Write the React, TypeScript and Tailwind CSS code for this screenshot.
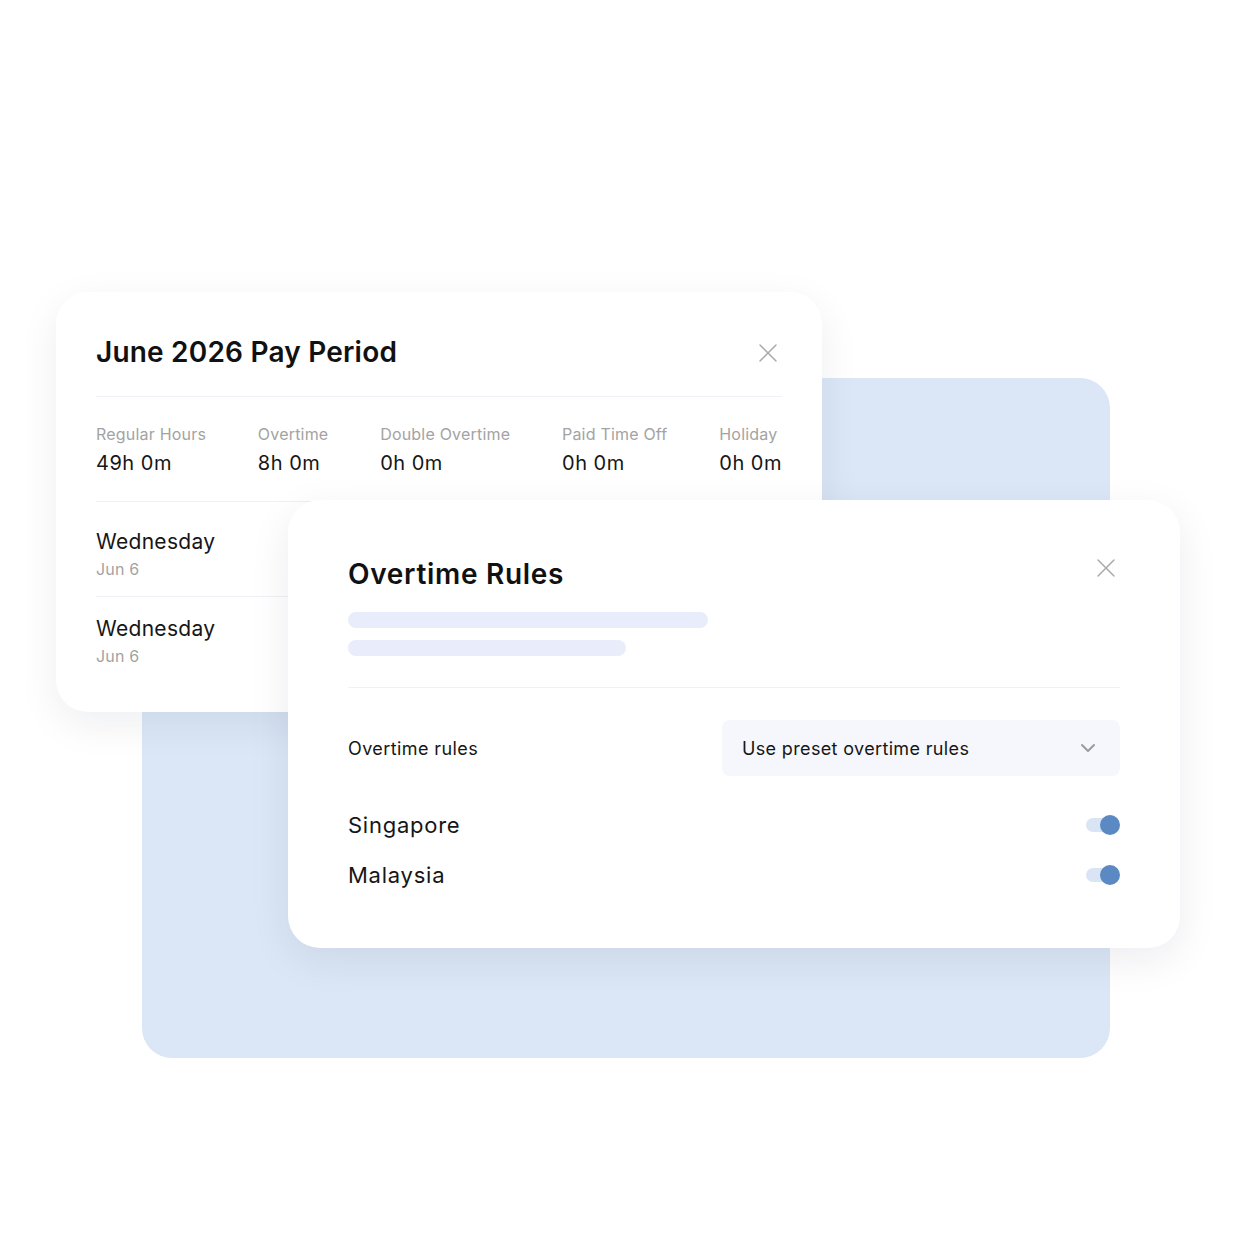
import { ChevronDown, X } from 'lucide-react';

const stats = [
  { label: 'Regular Hours', value: '49h 0m' },
  { label: 'Overtime', value: '8h 0m' },
  { label: 'Double Overtime', value: '0h 0m' },
  { label: 'Paid Time Off', value: '0h 0m' },
  { label: 'Holiday', value: '0h 0m' },
];

const days = [
  { id: 1, day: 'Wednesday', date: 'Jun 6', pad: 'pt-[26px] pb-[16px]' },
  { id: 2, day: 'Wednesday', date: 'Jun 6', pad: 'pt-[18px] pb-[16px]' },
];

const regions = ['Singapore', 'Malaysia'];

function Toggle() {
  return (
    <div className="relative h-[14px] w-[34px]">
      <div className="absolute left-0 top-0 h-[14px] w-[28px] rounded-full bg-[#d9e5f5]" />
      <div className="absolute right-0 top-1/2 h-5 w-5 -translate-y-1/2 rounded-full bg-[#5a89c3]" />
    </div>
  );
}

function PayPeriodCard() {
  return (
    <div className="absolute left-[56px] top-[292px] h-[420px] w-[766px] rounded-[32px] bg-white px-10 pt-[40px] shadow-[0_12px_40px_rgba(20,30,60,0.07)]">
      <div className="flex items-center justify-between">
        <h2 className="text-[28px] font-semibold leading-[40px] tracking-[0.2px] text-[#111]">June 2026 Pay Period</h2>
        <X className="-mr-[2px] mt-[2px] h-8 w-8 text-[#a9a9a9]" strokeWidth={1.1} />
      </div>
      <div className="mt-[24px] h-px bg-[#f0f1f6]" />
      <div className="flex justify-between pt-[26px] pb-[24px]">
        {stats.map((s) => (
          <div key={s.label} className="flex flex-col">
            <span className="text-[16px] leading-[22px] tracking-[0.2px] text-[#a3a3a3]">{s.label}</span>
            <span className="mt-[4px] text-[20px] leading-[28px] tracking-[0.5px] text-[#161616]">{s.value}</span>
          </div>
        ))}
      </div>
      <div className="w-[240px]">
        {days.map((d) => (
          <div key={d.id} className={`border-t border-[#f0f1f6] ${d.pad}`}>
            <div className="text-[21px] leading-[28px] tracking-[0.3px] text-[#161616]">{d.day}</div>
            <div className="mt-[2px] text-[16px] leading-[22px] tracking-[0.2px] text-[#a3a3a3]">{d.date}</div>
          </div>
        ))}
      </div>
    </div>
  );
}

function OvertimeCard() {
  return (
    <div className="absolute left-[288px] top-[500px] h-[448px] w-[892px] rounded-[32px] bg-white px-[60px] pt-[56px] shadow-[0_12px_40px_rgba(20,30,60,0.08)]">
      <div className="flex items-start justify-between">
        <h2 className="text-[28px] font-semibold leading-[36px] tracking-[0.7px] text-[#111]">Overtime Rules</h2>
        <X className="-mr-[2px] mt-[-4px] h-8 w-8 text-[#a9a9a9]" strokeWidth={1.1} />
      </div>
      <div className="mt-[20px] flex flex-col gap-3">
        <div className="h-4 w-[360px] rounded-full bg-[#e9edfb]" />
        <div className="h-4 w-[278px] rounded-full bg-[#e9edfb]" />
      </div>
      <div className="mt-[31px] h-px bg-[#f0f1f6]" />
      <div className="mt-[32px] flex items-center justify-between">
        <span className="text-[18px] tracking-[0.4px] text-[#161616]">Overtime rules</span>
        <div className="flex h-[56px] w-[398px] items-center justify-between rounded-lg bg-[#f5f7fc] pl-5 pr-5">
          <span className="text-[18px] tracking-[0.35px] text-[#161616]">Use preset overtime rules</span>
          <ChevronDown className="h-6 w-6 text-[#9b9b9b]" strokeWidth={2} />
        </div>
      </div>
      <div className="mt-[33px] flex flex-col gap-[18px]">
        {regions.map((r) => (
          <div key={r} className="flex items-center justify-between">
            <span className="text-[22px] leading-[32px] tracking-[0.75px] text-[#161616]">{r}</span>
            <Toggle />
          </div>
        ))}
      </div>
    </div>
  );
}

export default function App() {
  return (
    <div className="relative h-[1236px] w-[1236px] overflow-hidden bg-white font-['Inter',sans-serif]">
      {/* backdrop panel */}
      <div className="absolute left-[142px] top-[378px] h-[680px] w-[968px] rounded-[30px] bg-[#dbe7f6]" />
      <PayPeriodCard />
      <OvertimeCard />
    </div>
  );
}
